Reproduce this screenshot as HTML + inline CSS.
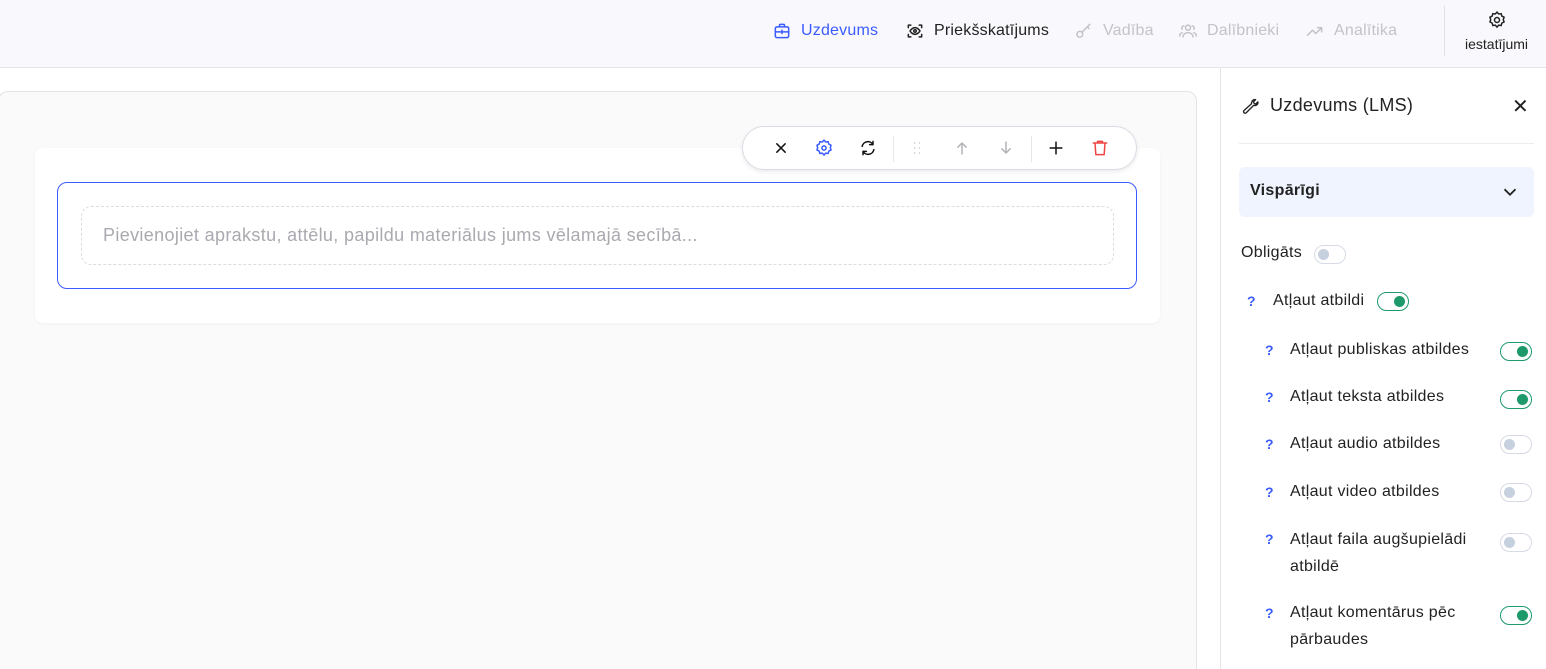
<!DOCTYPE html><html><head><meta charset="utf-8"><style>
*{box-sizing:border-box;margin:0;padding:0}
html{width:1546px;height:669px;overflow:hidden}
body{width:1546px;height:669px;overflow:hidden;font-family:"Liberation Sans",sans-serif;background:#fff;position:relative;color:#222}
.top{position:absolute;left:0;top:0;width:1546px;height:68px;background:#f9f9fd;border-bottom:1px solid #e4e4ea}
.nav{position:absolute;top:20px;font-size:16px;display:flex;align-items:center;gap:9px;height:22px;letter-spacing:.2px}
.nav svg{width:20px;height:20px;fill:none;stroke-width:1.8;stroke-linecap:round;stroke-linejoin:round}
.main{position:absolute;left:0;top:68px;width:1220px;height:601px;background:#fff}
.panel{position:absolute;left:-2px;top:91px;width:1199px;height:578px;background:#fafafa;border:1px solid #e3e3e8;border-bottom:none;border-radius:10px 10px 0 0}
.card{position:absolute;left:35px;top:148px;width:1125px;height:175px;background:#fff;border-radius:8px;box-shadow:0 1px 3px rgba(0,0,0,.04)}
.edit{position:absolute;left:57px;top:182px;width:1080px;height:107px;border:1px solid #3b5bfd;border-radius:10px;background:#fff}
.dash{position:absolute;left:81px;top:206px;width:1033px;height:59px;border:1.5px dashed #dcdce0;border-radius:10px;color:#a9a9b0;font-size:18px;letter-spacing:.35px;padding:18px 21px}
.tb{position:absolute;left:742px;top:126px;width:395px;height:44px;background:#fff;border:1px solid #dcdce6;border-radius:22px;box-shadow:0 2px 5px rgba(0,0,0,.08)}
.tb svg{position:absolute;top:11px;width:20px;height:20px;fill:none;stroke-width:1.8;stroke-linecap:round;stroke-linejoin:round}
.side{position:absolute;left:1220px;top:68px;width:326px;height:601px;border-left:1px solid #e4e4ea;background:#fff}
.row{position:absolute;font-size:16px;color:#222;letter-spacing:.3px}
.q{position:absolute;color:#3b5bfd;font-size:14px;font-weight:bold}
.tg{position:absolute;width:32px;height:19px;border-radius:10px;border:1.5px solid #d6dbe5;background:#fff}
.tg::after{content:"";position:absolute;top:2.5px;left:3px;width:11px;height:11px;border-radius:50%;background:#c7d0df}
.tg.on{border-color:#1e9a6a}
.tg.on::after{left:auto;right:3px;background:#1e9a6a}
</style></head><body>
<div class="top">
 <div class="nav" style="left:772px;color:#3b5bfd"><svg viewBox="0 0 24 24" stroke="#3b5bfd"><rect x="4" y="7" width="16" height="13" rx="2"/><path d="M9 7V5a1 1 0 0 1 1-1h4a1 1 0 0 1 1 1v2M4 13h16M12 11v4"/></svg>Uzdevums</div>
 <div class="nav" style="left:905px;color:#222"><svg viewBox="0 0 24 24" stroke="#222"><path d="M4 8V5h3M17 5h3v3M20 16v3h-3M7 19H4v-3"/><path d="M6 12s2.5-4 6-4 6 4 6 4-2.5 4-6 4-6-4-6-4z"/><circle cx="12" cy="12" r="1.5"/></svg>Priekšskatījums</div>
 <div class="nav" style="left:1074px;color:#c4c4c8"><svg viewBox="0 0 24 24" stroke="#c4c4c8"><circle cx="7" cy="16" r="3.5"/><path d="M9.5 13.5L19 4M16 7l2 2"/></svg>Vadība</div>
 <div class="nav" style="left:1178px;color:#c4c4c8"><svg viewBox="0 0 24 24" stroke="#c4c4c8"><circle cx="12" cy="8" r="3"/><path d="M6 19c0-3 3-5 6-5s6 2 6 5M5 10a2.5 2.5 0 0 1 2-4M19 10a2.5 2.5 0 0 0-2-4M2 18c0-2 1.5-3.5 3-4M22 18c0-2-1.5-3.5-3-4"/></svg>Dalībnieki</div>
 <div class="nav" style="left:1305px;color:#c4c4c8"><svg viewBox="0 0 24 24" stroke="#c4c4c8"><path d="M3 17l6-6 4 4 7-7M15 8h5v5"/></svg>Analītika</div>
 <div style="position:absolute;left:1444px;top:6px;width:1px;height:50px;background:#e0e0e6"></div>
 <svg style="position:absolute;left:1487px;top:10px" width="20" height="20" viewBox="0 0 24 24" fill="none" stroke="#222" stroke-width="1.8"><circle cx="12" cy="12" r="3"/><path d="M12 2.5l2 2.3 3-.4.8 2.9 2.7 1.4-1 2.8 1 2.8-2.7 1.4-.8 2.9-3-.4-2 2.3-2-2.3-3 .4-.8-2.9-2.7-1.4 1-2.8-1-2.8 2.7-1.4.8-2.9 3 .4z"/></svg>
 <div style="position:absolute;left:1465px;top:36px;font-size:14px;color:#222">iestatījumi</div>
</div>
<div class="main"></div>
<div class="panel"></div>
<div class="card"></div>
<div class="edit"></div>
<div class="dash">Pievienojiet aprakstu, attēlu, papildu materiālus jums vēlamajā secībā...</div>
<div class="tb">
 <svg style="left:28px" viewBox="0 0 24 24" stroke="#111"><path d="M7 7l10 10M17 7L7 17"/></svg>
 <svg style="left:71px" viewBox="0 0 24 24" stroke="#3b5bfd"><circle cx="12" cy="12" r="2.5"/><path d="M12 2.5l2 2.3 3-.4.8 2.9 2.7 1.4-1 2.8 1 2.8-2.7 1.4-.8 2.9-3-.4-2 2.3-2-2.3-3 .4-.8-2.9-2.7-1.4 1-2.8-1-2.8 2.7-1.4.8-2.9 3 .4z"/></svg>
 <svg style="left:115px" viewBox="0 0 24 24" stroke="#111" stroke-width="2.2"><path d="M5 10a7 7 0 0 1 13-2M19 14a7 7 0 0 1-13 2M18 4v4h-4M6 20v-4h4"/></svg>
 <div style="position:absolute;left:150px;top:9px;width:1px;height:26px;background:#e6e6ea"></div>
 <svg style="left:164px" viewBox="0 0 24 24" stroke="#c4c4c8" stroke-width="2.5"><path d="M9 6h.01M15 6h.01M9 12h.01M15 12h.01M9 18h.01M15 18h.01"/></svg>
 <svg style="left:209px" viewBox="0 0 24 24" stroke="#b4b4b8"><path d="M12 19V6M7 11l5-5 5 5"/></svg>
 <svg style="left:253px" viewBox="0 0 24 24" stroke="#b4b4b8"><path d="M12 5v13M7 13l5 5 5-5"/></svg>
 <div style="position:absolute;left:288px;top:9px;width:1px;height:26px;background:#e6e6ea"></div>
 <svg style="left:303px" viewBox="0 0 24 24" stroke="#111"><path d="M12 5v14M5 12h14"/></svg>
 <svg style="left:347px" viewBox="0 0 24 24" stroke="#ef4444"><path d="M4 6h16M9 6V4h6v2M6 6l1 14h10l1-14"/></svg>
</div>
<div class="side"></div>
<svg style="position:absolute;left:1241px;top:97px" width="18" height="18" viewBox="0 0 24 24" fill="none" stroke="#222" stroke-width="1.8" stroke-linejoin="round"><path d="M14.5 6.5a4 4 0 0 1 5-3l-3 3 1 2 2 1 3-3a4 4 0 0 1-5.5 4.5L7 21a2 2 0 0 1-3-3l10-9a4 4 0 0 1 .5-2.5z"/></svg>
<div class="row" style="left:1270px;top:95px;font-size:18px">Uzdevums (LMS)</div>
<div class="row" style="left:1512px;top:94px;font-size:20px">✕</div>
<div style="position:absolute;left:1239px;top:143px;width:295px;height:1px;background:#ececf0"></div>
<div style="position:absolute;left:1239px;top:167px;width:295px;height:50px;background:#eff4fe;border-radius:6px"></div>
<div class="row" style="left:1250px;top:182px;font-weight:bold">Vispārīgi</div>
<svg style="position:absolute;left:1499px;top:181px" width="22" height="22" viewBox="0 0 24 24" fill="none" stroke="#222" stroke-width="2"><path d="M6 9l6 6 6-6"/></svg>
<div class="row" style="left:1241px;top:244px">Obligāts</div><div class="tg" style="left:1314px;top:245px"></div>
<div class="q" style="left:1247px;top:293px">?</div><div class="row" style="left:1273px;top:292px">Atļaut atbildi</div><div class="tg on" style="left:1377px;top:292px"></div>
<div class="q" style="left:1265px;top:342px">?</div><div class="row" style="left:1290px;top:341px">Atļaut publiskas atbildes</div><div class="tg on" style="left:1500px;top:342px"></div>
<div class="q" style="left:1265px;top:389px">?</div><div class="row" style="left:1290px;top:388px">Atļaut teksta atbildes</div><div class="tg on" style="left:1500px;top:390px"></div>
<div class="q" style="left:1265px;top:436px">?</div><div class="row" style="left:1290px;top:435px">Atļaut audio atbildes</div><div class="tg" style="left:1500px;top:435px"></div>
<div class="q" style="left:1265px;top:484px">?</div><div class="row" style="left:1290px;top:483px">Atļaut video atbildes</div><div class="tg" style="left:1500px;top:483px"></div>
<div class="q" style="left:1265px;top:531px">?</div><div class="row" style="left:1290px;top:526px;line-height:27px">Atļaut faila augšupielādi<br>atbildē</div><div class="tg" style="left:1500px;top:533px"></div>
<div class="q" style="left:1265px;top:605px">?</div><div class="row" style="left:1290px;top:599px;line-height:27px">Atļaut komentārus pēc<br>pārbaudes</div><div class="tg on" style="left:1500px;top:606px"></div>
</body></html>
